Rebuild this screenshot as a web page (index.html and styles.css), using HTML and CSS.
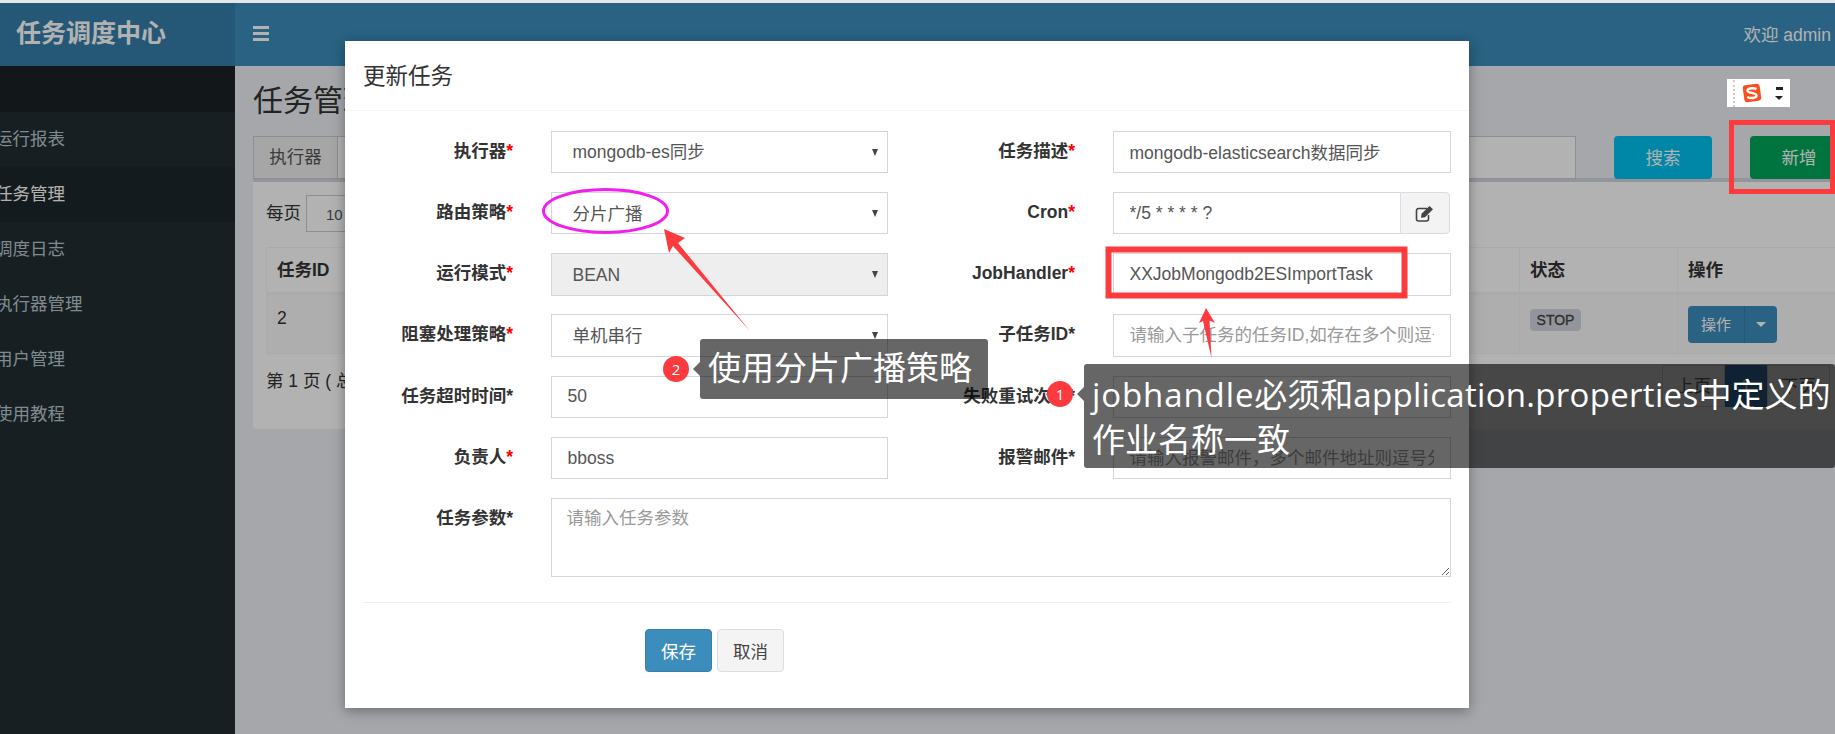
FILE: index.html
```html
<!DOCTYPE html>
<html lang="zh-CN">
<head>
<meta charset="utf-8">
<title>任务调度中心</title>
<link rel="stylesheet" href="styles.css">
</head>
<body>
<div class="page">
  <header class="topbar">
    <div class="logo">任务调度中心</div>
    <div class="nav">
      <span class="bars"><i></i><i></i><i></i></span>
      <span class="welcome">欢迎 admin</span>
    </div>
  </header>
  <div class="shell">
    <aside class="sidebar">
      <div class="side-head"></div>
      <ul class="menu">
        <li>运行报表</li>
        <li class="active">任务管理</li>
        <li>调度日志</li>
        <li>执行器管理</li>
        <li>用户管理</li>
        <li>使用教程</li>
      </ul>
    </aside>
    <main class="content">
      <h1 class="page-title">任务管理</h1>
      <div class="filter">
        <div class="filter-group">
          <span class="filter-addon">执行器</span>
          <span class="filter-field"></span>
        </div>
        <button class="btn-big btn-search">搜索</button>
        <button class="btn-big btn-add">新增</button>
      </div>
      <section class="panel">
        <div class="length-row"><span class="length-label">每页</span><span class="length-select">10</span></div>
        <table class="jobs">
          <colgroup>
            <col class="c-id"><col class="c-a"><col class="c-a"><col class="c-a"><col class="c-a"><col class="c-status"><col class="c-op">
          </colgroup>
          <thead>
            <tr><th>任务ID</th><th>执行器</th><th>任务描述</th><th>运行模式</th><th>Cron</th><th>状态</th><th>操作</th></tr>
          </thead>
          <tbody>
            <tr>
              <td>2</td><td></td><td></td><td></td><td></td>
              <td><span class="badge">STOP</span></td>
              <td><span class="split"><span class="split-l">操作</span><span class="split-r"><i class="caret"></i></span></span></td>
            </tr>
          </tbody>
        </table>
        <div class="panel-foot">
          <span class="page-info">第 1 页 ( 总</span>
          <div class="pager"><span>上页</span><span class="current">1</span><span>下页</span></div>
        </div>
      </section>
    </main>
  </div>

  <div class="backdrop"></div>

  <div class="ime">
    <svg class="ime-logo" viewBox="0 0 22 22" width="22" height="22"><rect x="2.5" y="2.5" width="17" height="17" rx="3" transform="rotate(-8 11 11)" fill="#f5501e"/><path d="M15.5 7 C13 5.6 7 6 6.5 8.6 C6.2 11.4 15.6 10.4 15.6 13.6 C15.4 16.4 9 16.6 6.2 15" fill="none" stroke="#fff" stroke-width="2.4"/></svg>
    <span class="ime-menu"><i class="ime-dash"></i><i class="ime-tri"></i></span>
  </div>

  <div class="modal">
    <div class="modal-head">更新任务</div>
    <form class="modal-form">
      <label class="lbl">执行器<em>*</em></label>
      <div class="sel"><select><option>mongodb-es同步</option></select></div>
      <label class="lbl">任务描述<em>*</em></label>
      <input class="ctl" value="mongodb-elasticsearch数据同步">

      <label class="lbl">路由策略<em>*</em></label>
      <div class="sel"><select><option>分片广播</option></select></div>
      <label class="lbl">Cron<em>*</em></label>
      <div class="cron">
        <input class="ctl cron-input" value="*/5 * * * * ?">
        <span class="cron-addon"><svg viewBox="0 0 20 17" width="20" height="17"><path d="M13.5 10 V14 A2 2 0 0 1 11.5 16 H3.5 A2 2 0 0 1 1.5 14 V5.5 A2 2 0 0 1 3.5 3.5 H12" fill="none" stroke="#444" stroke-width="1.6"/><path d="M6.5 8.8 L14.5 1 L18 4.3 L10 12.2 L6 12.8 Z" fill="#444"/></svg></span>
      </div>

      <label class="lbl">运行模式<em>*</em></label>
      <div class="sel sel-off"><select disabled><option>BEAN</option></select></div>
      <label class="lbl">JobHandler<em>*</em></label>
      <input class="ctl" value="XXJobMongodb2ESImportTask">

      <label class="lbl">阻塞处理策略<em>*</em></label>
      <div class="sel"><select><option>单机串行</option></select></div>
      <label class="lbl">子任务ID*</label>
      <input class="ctl" placeholder="请输入子任务的任务ID,如存在多个则逗号分隔">

      <label class="lbl">任务超时时间*</label>
      <input class="ctl" value="50">
      <label class="lbl">失败重试次数*</label>
      <input class="ctl">

      <label class="lbl">负责人<em>*</em></label>
      <input class="ctl" value="bboss">
      <label class="lbl">报警邮件*</label>
      <input class="ctl" placeholder="请输入报警邮件，多个邮件地址则逗号分隔">

      <label class="lbl">任务参数*</label>
      <textarea class="ctl area" placeholder="请输入任务参数"></textarea>
    </form>
    <div class="modal-rule"></div>
    <div class="modal-actions">
      <button class="btn-save">保存</button>
      <button class="btn-cancel">取消</button>
    </div>
  </div>

  <svg class="marks" width="1835" height="734" viewBox="0 0 1835 734">
    <ellipse cx="605.5" cy="211" rx="62" ry="21.5" fill="none" stroke="#f01ff0" stroke-width="3"/>
    <polygon points="664,229 685,238 678,243 750,331 673,246 669,253" fill="#fd3a3d"/>
    <polygon points="1206,308 1215,323 1209.5,320.5 1211.5,358 1203,321 1199,323" fill="#fd3a3d"/>
    <rect x="1108.5" y="249.5" width="296" height="46" fill="none" stroke="#fd3a3d" stroke-width="6"/>
    <rect x="1731.5" y="122.5" width="101" height="69" fill="none" stroke="#fd3a3d" stroke-width="5"/>
  </svg>

  <span class="dot dot-two">2</span>
  <div class="tip tip-two">使用分片广播策略</div>
  <span class="dot dot-one">1</span>
  <div class="tip tip-one"><span class="word-job">jobhandle</span>必须和<span class="word-app">application.properties</span>中定义的<br>作业名称一致</div>
</div>
</body>
</html>
```
FILE: styles.css
```css
* { box-sizing: border-box; }
html, body { margin: 0; padding: 0; }
body {
  font-family: "Liberation Sans", "Noto Sans CJK SC", sans-serif;
  font-size: 17.5px;
  color: #333;
}
.page {
  position: relative;
  width: 1835px;
  height: 734px;
  overflow: hidden;
  background: #ecf0f5;
  border-top: 3px solid #e4e6e8;
}

/* top bar */
.topbar { display: flex; height: 63px; }
.logo {
  width: 235px;
  padding-left: 16px;
  background: #367fa9;
  color: #fff;
  font-size: 25px;
  font-weight: 700;
  line-height: 61px;
}
.nav {
  flex: 1;
  display: flex;
  align-items: center;
  justify-content: space-between;
  padding: 0 4px 3px 18px;
  background: #3c8dbc;
  color: #fff;
}
.bars { display: flex; flex-direction: column; gap: 3px; width: 16px; }
.bars i { display: block; height: 3px; background: #fff; }

/* shell */
.shell { display: flex; height: 668px; }
.sidebar { width: 235px; background: #222d32; overflow: hidden; }
.side-head { height: 46px; background: #1a2226; }
.menu { list-style: none; margin: 0; padding: 0; }
.menu li {
  height: 55px;
  line-height: 54px;
  margin-left: -5px;
  padding-left: 0;
  color: #b8c7ce;
  white-space: nowrap;
}
.menu li.active { background: #1e282c; color: #fff; }

.content { flex: 1; min-width: 0; padding: 17px 0 0 18px; overflow: hidden; }
.page-title { margin: 0 0 17px; font-size: 30px; font-weight: 400; line-height: 36px; white-space: nowrap; }
.filter { display: flex; height: 43px; }
.filter-group { display: flex; flex: none; width: 1323px; }
.filter-addon {
  width: 85px;
  background: #eee;
  border: 1px solid #ccc;
  text-align: center;
  line-height: 41px;
  color: #555;
}
.filter-field { flex: 1; background: #fff; border: 1px solid #ccc; border-left: 0; }
.btn-big {
  flex: none;
  height: 43px;
  padding: 0 0 3px;
  border: 0;
  border-radius: 4px;
  color: #fff;
  font: inherit;
}
.btn-search { width: 98px; margin-left: 38px; background: #00c0ef; }
.btn-add { width: 98px; margin-left: 38px; background: #00a65a; }

.panel {
  height: 251px;
  margin-right: -20px;
  padding: 13px 13px 0;
  margin-top: -1px;
  background: #fff;
  border-top: 4px solid #d2d6de;
  border-radius: 4px;
}
.length-row { display: flex; align-items: center; gap: 5px; height: 37px; }
.length-label { margin-top: -5px; }
.length-select {
  width: 90px;
  height: 37px;
  padding-left: 19px;
  border: 1px solid #ccc;
  font-size: 15px;
  line-height: 38px;
  color: #555;
}
.jobs { width: 1570px; margin-top: 15px; border-collapse: collapse; table-layout: fixed; }
.c-id { width: 105px; }
.c-a { width: 287px; }
.c-status { width: 158px; }
.c-op { width: 159px; }
.jobs th, .jobs td { border: 1px solid #f4f4f4; padding: 10px; text-align: left; vertical-align: top; }
.jobs th { height: 46px; padding-top: 8px; border-bottom-width: 3px; font-weight: 700; }
.jobs td { height: 58px; padding-top: 13px; background: #f9f9f9; }
.badge {
  display: inline-block;
  width: 51px;
  height: 22px;
  margin-top: 1px;
  background: #d2d6de;
  border-radius: 4px;
  color: #444;
  font-size: 14px;
  line-height: 22px;
  text-align: center;
  -webkit-text-stroke: .3px #444;
}
.split { display: inline-flex; height: 37px; margin-top: -2px; color: #fff; font-size: 15px; line-height: 37px; }
.split-l { width: 56px; background: #3c8dbc; border-radius: 4px 0 0 4px; text-align: center; }
.split-r { display: flex; align-items: center; justify-content: center; width: 33px; background: #3c8dbc; border-left: 1px solid #367fa9; border-radius: 0 4px 4px 0; }
.caret { border-top: 5px solid #fff; border-left: 5px solid transparent; border-right: 5px solid transparent; }
.panel-foot { display: flex; justify-content: space-between; margin-top: 11px; }
.page-info { margin-top: 2px; }
.pager { display: flex; height: 42px; margin-right: 12px; }
.pager span { padding: 0 13px; border: 1px solid #ddd; line-height: 40px; color: #666; white-space: nowrap; }
.pager .current { width: 42px; background: #337ab7; border-color: #337ab7; color: #fff; text-align: center; }

/* dimming layer */
.backdrop { position: absolute; inset: 0; background: rgba(0, 0, 0, .3); }

/* input method floating bar */
.ime {
  position: absolute;
  left: 1727px;
  top: 76px;
  display: flex;
  align-items: center;
  gap: 12px;
  width: 63px;
  height: 28px;
  padding-left: 14px;
  background: #fff;
}
.ime::before {
  content: "";
  position: absolute;
  left: 6px;
  top: 1px;
  bottom: 0;
  border-left: 2px dotted #ccc;
}
.ime-logo { display: block; flex: none; }
.ime-menu { display: flex; flex-direction: column; gap: 6px; align-items: center; }
.ime-dash { width: 7px; height: 3px; background: #222; }
.ime-tri { border-top: 4px solid #222; border-left: 4px solid transparent; border-right: 4px solid transparent; }

/* modal */
.modal {
  position: absolute;
  left: 345px;
  top: 38px;
  width: 1124px;
  height: 667px;
  background: #fff;
  box-shadow: 0 3px 12px rgba(0, 0, 0, .35);
}
.modal-head {
  height: 70px;
  padding-left: 18px;
  border-bottom: 1px solid #f4f4f4;
  font-size: 22.5px;
  line-height: 72px;
}
.modal-form {
  display: grid;
  grid-template-columns: 150px 337px 150px 338px;
  grid-auto-rows: 42.5px;
  column-gap: 37.5px;
  row-gap: 18.75px;
  padding: 19.5px 18px 0;
}
.lbl { font-weight: 700; text-align: right; line-height: 41px; white-space: nowrap; }
.lbl em { color: #f00; font-style: normal; }
.ctl {
  display: block;
  width: 100%;
  height: 42.5px;
  padding: 0 16px;
  border: 1px solid #d2d6de;
  border-radius: 0;
  background: #fff;
  color: #555;
  font: inherit;
  outline: 0;
}
.ctl::placeholder { color: #999; opacity: 1; }
.sel { position: relative; }
.sel select {
  display: block;
  width: 100%;
  height: 42.5px;
  padding: 1px 16px 0 21px;
  border: 1px solid #d2d6de;
  border-radius: 0;
  background: #fff;
  color: #555;
  font: inherit;
  appearance: none;
  outline: 0;
  opacity: 1;
}
.sel::after {
  content: "";
  position: absolute;
  right: 10px;
  top: 18px;
  border-top: 7px solid #444;
  border-left: 3.5px solid transparent;
  border-right: 3.5px solid transparent;
}
.sel-off select { background: #eee; }
.cron { display: flex; width: 337px; }
.cron-input { flex: 1; min-width: 0; border-right: 0; }
.cron-addon {
  display: flex;
  align-items: center;
  justify-content: center;
  width: 50px;
  height: 42.5px;
  background: #f3f3f3;
  border: 1px solid #d9dce2;
  border-radius: 0 4px 4px 0;
}
.area {
  grid-column: 2 / -1;
  height: 79px;
  padding: 5px 15px;
  resize: vertical;
}
.modal-rule { height: 1px; margin: 61px 18px 0; background: #f0f0f0; }
.modal-actions { display: flex; gap: 5px; padding: 26px 0 0 300px; }
.btn-save, .btn-cancel {
  height: 43px;
  border-radius: 4px;
  font: inherit;
}
.btn-save { width: 67px; border: 1px solid #367fa9; background: #3c8dbc; color: #fff; }
.btn-cancel { width: 67px; border: 1px solid #ddd; background: #f4f4f4; color: #444; }

/* screenshot annotations */
.marks { position: absolute; left: 0; top: -3px; pointer-events: none; }
.tip {
  position: absolute;
  padding: 0 8px;
  background: rgba(0, 0, 0, .6);
  border-radius: 3px;
  color: #fff;
  font-family: "Open Sans", "Noto Sans CJK SC", sans-serif;
  font-size: 33px;
  line-height: 45px;
  white-space: nowrap;
}
.word-job { letter-spacing: .9px; }
.word-app { letter-spacing: .3px; }
.tip::before {
  content: "";
  position: absolute;
  left: -7px;
  border-top: 7px solid transparent;
  border-bottom: 7px solid transparent;
  border-right: 7px solid rgba(0, 0, 0, .6);
}
.tip-two { left: 700px; top: 336px; width: 288px; height: 60px; line-height: 58px; }
.tip-two::before { top: 23px; }
.tip-one { left: 1084px; top: 361px; width: 751px; height: 104px; padding-top: 8px; }
.tip-one::before { top: 23px; }
.dot {
  position: absolute;
  width: 26px;
  height: 26px;
  border-radius: 50%;
  background: #fd3a3d;
  color: #fff;
  font-family: "Open Sans", sans-serif;
  font-size: 15px;
  line-height: 26px;
  text-align: center;
}
.dot-two { left: 663px; top: 353px; }
.dot-one { left: 1047px; top: 378px; }
```
